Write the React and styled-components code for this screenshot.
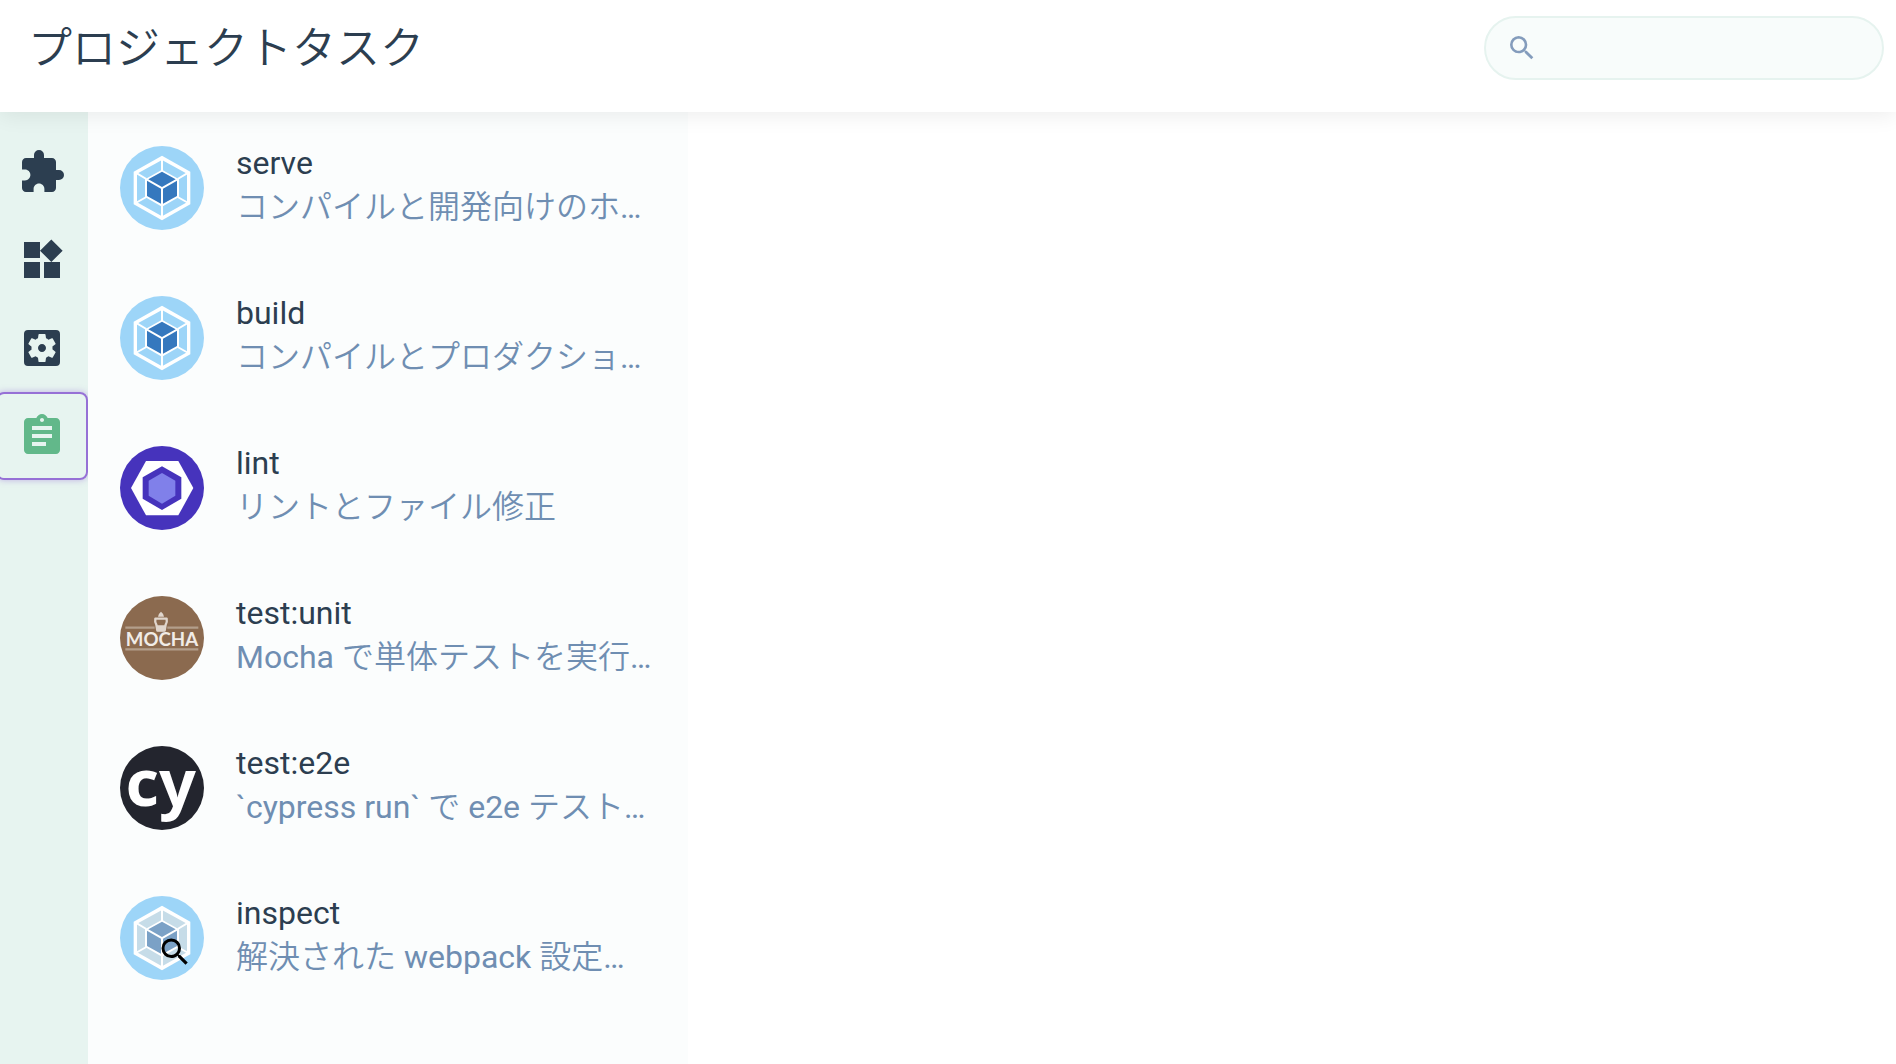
import styled, { createGlobalStyle, css } from "styled-components"
import { MdAssignment, MdExtension, MdSearch, MdSettingsApplications, MdWidgets } from "react-icons/md"

const GlobalStyle = createGlobalStyle`
    * {
        box-sizing: border-box;
    }
    body {
        margin: 0;
        background: #fff;
        color: #2c3e50;
        font-family: Roboto, "Noto Sans CJK JP DemiLight", "Noto Sans CJK JP", sans-serif;
        font-size: 32px;
    }
`

const Page = styled.div`
    min-height: 100vh;
    display: flex;
    flex-direction: column;
`

const Header = styled.header`
    position: relative;
    z-index: 1;
    height: 112px;
    padding: 16px 12px 16px 28px;
    display: flex;
    align-items: flex-start;
    justify-content: space-between;
    background: #fff;
    box-shadow: 0 4px 20px rgba(0, 0, 0, 0.07);
`

const Title = styled.h1`
    margin: 0;
    font-size: 44px;
    font-weight: 400;
    line-height: 66px;
`

const SearchBox = styled.label`
    width: 400px;
    height: 64px;
    padding: 0 20px;
    display: flex;
    align-items: center;
    gap: 8px;
    border: 2px solid #e6f3ef;
    border-radius: 32px;
    background: #f8fcfb;
    color: #849cbc;

    svg {
        flex: none;
    }
`

const SearchInput = styled.input`
    flex: 1;
    min-width: 0;
    border: none;
    outline: none;
    background: transparent;
    color: #2c3e50;
    font: inherit;
`

const Body = styled.div`
    flex: 1;
    display: flex;
`

const SideBar = styled.nav`
    width: 88px;
    padding: 16px 0;
    display: flex;
    flex-direction: column;
    background: #e7f4f0;
`

const NavButton = styled.button`
    height: 88px;
    margin-left: -4px;
    padding: 0;
    display: flex;
    align-items: center;
    justify-content: center;
    border: 2px solid transparent;
    border-radius: 8px;
    background: transparent;
    color: #2c3e50;
    cursor: pointer;

    ${props => props.$active && css`
        border-color: #9670d6;
        box-shadow: 0 0 6px rgba(150, 112, 214, 0.5);
        color: #62b88a;
    `}
`

const TaskList = styled.ul`
    width: 600px;
    margin: 0;
    padding: 1px 0 0;
    list-style: none;
    background: #fbfdfd;
`

const Task = styled.a`
    height: 150px;
    padding: 0 32px;
    display: flex;
    align-items: center;
    gap: 32px;
    color: inherit;
    text-decoration: none;
`

const Avatar = styled.div`
    position: relative;
    flex: none;
    width: 84px;
    height: 84px;
    border-radius: 50%;
    background: ${props => props.$color};
`

const Logo = styled.svg`
    display: block;
    width: 84px;
    height: 84px;
    overflow: visible;
`

const Badge = styled(MdSearch)`
    position: absolute;
    right: 11px;
    bottom: 10px;
    color: #000;
`

const Info = styled.div`
    flex: 1;
    min-width: 0;
    padding-bottom: 6px;
    line-height: 44px;
`

const Name = styled.div`
    height: 44px;
`

const Description = styled.div`
    height: 44px;
    color: #6f8eb2;
    white-space: nowrap;
`

const Main = styled.main`
    flex: 1;
`

const WebpackLogo = ({ side = "#9dd5f8", cube = "#3578be" }) => (
    <Logo viewBox="0 0 252 252">
        <path fill="#fff" d="M126 29l85 48v98l-85 48-85-48V77z" />
        <path fill={side} d="M126 42l75 41v86l-75 42-75-42V83z" />
        <path fill="#fff" d="M126 71l51 29v53l-51 29-51-29v-53z" />
        <path stroke="#fff" strokeWidth="6" d="M126 35v40M205 80l-32 19M205 171l-32-18M126 215v-36M47 171l32-18M47 80l32 19" />
        <path fill={cube} d="M126 77l41 23-41 23-41-23zM81 104l42 24v45l-42-23zM171 104l-42 24v45l42-23z" />
    </Logo>
)

const EslintLogo = () => (
    <Logo viewBox="0 0 252 252">
        <path fill="#fff" d="M33 126l45-81h97l45 81-45 82H78z" />
        <path fill="#4633bc" d="M126 61l58 33v64l-58 34-58-34V94z" />
        <path fill="#8080ea" d="M126 81l40 23v45l-40 24-40-24v-45z" />
    </Logo>
)

const MochaLogo = () => (
    <Logo viewBox="0 0 252 252">
        <path stroke="#b39e8b" strokeWidth="7" d="M16 95h88M142 95h93M16 160h219" />
        <path fill="#e0d6cd" d="M123 47q9 7 9 15h-18q0-8 9-15z" />
        <path fill="none" stroke="#e0d6cd" strokeWidth="7" strokeLinejoin="round" d="M106 68h34q2 10-3 18l-3 18h-22l-3-18q-5-8-3-18z" />
        <path fill="#e0d6cd" d="M109 88h28l-3 18h-22z" />
        <text x="126" y="150" fill="#f1ece7" fontFamily="Lato, sans-serif" fontSize="56" fontWeight="700" textAnchor="middle">MOCHA</text>
    </Logo>
)

const CypressLogo = () => (
    <Logo viewBox="0 0 252 252">
        <text x="122" y="179" fill="#fff" fontFamily="'Noto Sans', sans-serif" fontSize="194" fontWeight="700" textAnchor="middle">cy</text>
    </Logo>
)

const views = [
    { name: "プラグイン", Icon: MdExtension },
    { name: "依存", Icon: MdWidgets },
    { name: "設定", Icon: MdSettingsApplications },
    { name: "タスク", Icon: MdAssignment, active: true }
]

const tasks = [
    { name: "serve", text: "コンパイルと開発向けのホ…", color: "#9dd5f8", logo: <WebpackLogo /> },
    { name: "build", text: "コンパイルとプロダクショ…", color: "#9dd5f8", logo: <WebpackLogo /> },
    { name: "lint", text: "リントとファイル修正", color: "#4633bc", logo: <EslintLogo /> },
    { name: "test:unit", text: "Mocha で単体テストを実行…", color: "#8b6a4f", logo: <MochaLogo /> },
    { name: "test:e2e", text: "`cypress run` で e2e テスト…", color: "#23252e", logo: <CypressLogo /> },
    { name: "inspect", text: "解決された webpack 設定…", color: "#9dd5f8", logo: <WebpackLogo side="#c6dce8" cube="#7ba1c6" />, badge: true }
]

export default () => {
    return (
        <>
            <GlobalStyle />
            <Page lang="ja">
                <Header>
                    <Title>プロジェクトタスク</Title>
                    <SearchBox>
                        <MdSearch size={32} />
                        <SearchInput type="search" aria-label="検索" />
                    </SearchBox>
                </Header>
                <Body>
                    <SideBar>
                        {views.map(({ name, Icon, active }) =>
                            <NavButton key={name} type="button" aria-label={name} $active={active}>
                                <Icon size={48} />
                            </NavButton>
                        )}
                    </SideBar>
                    <TaskList>
                        {tasks.map((task) =>
                            <li key={task.name}>
                                <Task href={"#" + task.name}>
                                    <Avatar $color={task.color}>
                                        {task.logo}
                                        {task.badge && <Badge size={36} />}
                                    </Avatar>
                                    <Info>
                                        <Name>{task.name}</Name>
                                        <Description>{task.text}</Description>
                                    </Info>
                                </Task>
                            </li>
                        )}
                    </TaskList>
                    <Main />
                </Body>
            </Page>
        </>
    )
}
